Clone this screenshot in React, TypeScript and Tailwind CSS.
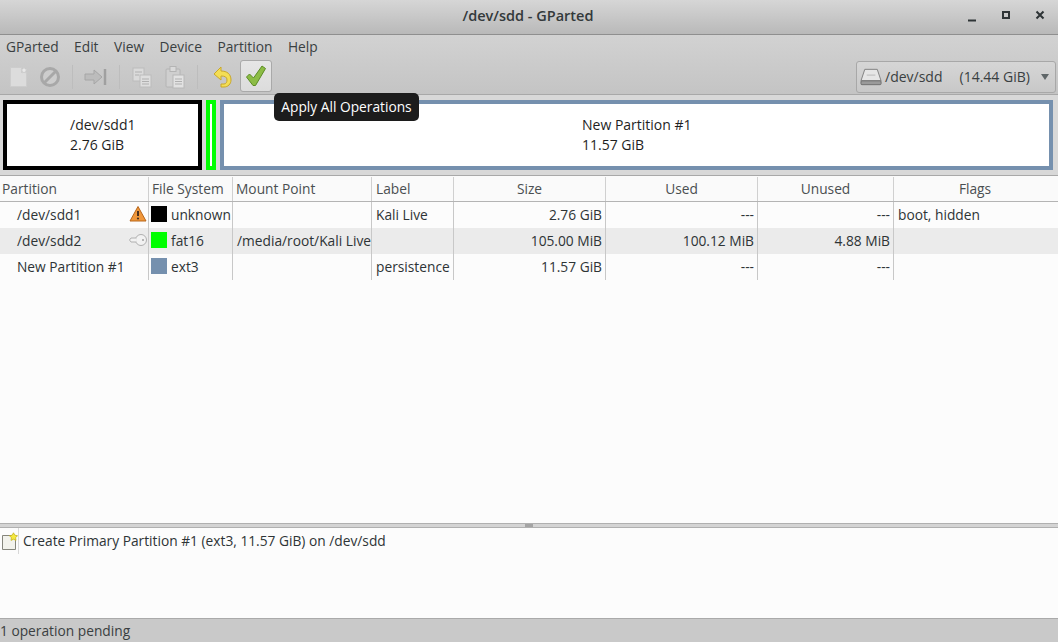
const font = "font-['Open_Sans','Noto_Sans',sans-serif]";

const columns = "grid grid-cols-[149px_84px_139px_82px_152px_152px_136px_1fr]";

function DisabledNewIcon() {
  return (
    <svg width="20" height="22" viewBox="0 0 20 22">
      <path d="M1.500 1.500h11l5 5v14h-16z" fill="#dcdcdc" stroke="#cdcdcd" />
      <path d="M12.500 1.500v5h5" fill="#c6c6c6" stroke="#cdcdcd" />
      <path d="M15 1l1 2 2 .5-1.500 1.500.3 2-1.800-1-1.800 1 .3-2L12 3.500l2-.5z" fill="#e8e8e8" stroke="#c4c4c4" strokeWidth="0.500" />
    </svg>
  );
}

function PendingIcon() {
  return (
    <svg className="shrink-0" width="17" height="19" viewBox="0 0 17 19">
      <path d="M1.500 3.500h9l4 4v10h-13z" fill="#f2f2ec" stroke="#85857c" />
      <path d="M12.500 0.800l1.300 2.400 2.700.5-1.900 2 .4 2.700-2.500-1.200-2.500 1.200.4-2.700-1.900-2 2.700-.5z" fill="#f6ea3e" stroke="#c4b21f" strokeWidth="0.800" />
    </svg>
  );
}

function CopyIcon() {
  return (
    <svg width="22" height="22" viewBox="0 0 22 22">
      <rect x="2" y="2" width="11" height="13" fill="#dadada" stroke="#bcbcbc" />
      <rect x="9" y="9" width="11" height="12" fill="#dedede" stroke="#bcbcbc" />
      <path d="M4 6h7M4 9h4M11 13h7M11 15.500h7M11 18h7" stroke="#b0b0b0" />
    </svg>
  );
}

function PasteIcon() {
  return (
    <svg width="22" height="24" viewBox="0 0 22 24">
      <rect x="2" y="4" width="14" height="18" rx="1" fill="#cfcfcf" stroke="#b4b4b4" />
      <rect x="6" y="1.500" width="6" height="5" fill="#dadada" stroke="#b4b4b4" />
      <rect x="9" y="10" width="11" height="13" fill="#e2e2e2" stroke="#b8b8b8" />
      <path d="M11 14h7M11 16.500h7M11 19h7" stroke="#b0b0b0" />
    </svg>
  );
}

function Sep() {
  return <div className="h-[24px] w-px bg-[#bdbdbd]" />;
}

function TreeCell({ children, className = "" }: { children?: React.ReactNode; className?: string }) {
  return (
    <div className={`flex h-[26px] items-center overflow-hidden whitespace-nowrap border-r border-[#c8c8c8] ${className}`}>
      {children}
    </div>
  );
}

const rows = [
  {
    name: "/dev/sdd1",
    icon: "warn",
    color: "bg-black",
    fs: "unknown",
    mount: "",
    label: "Kali Live",
    size: "2.76 GiB",
    used: "---",
    unused: "---",
    flags: "boot, hidden",
  },
  {
    name: "/dev/sdd2",
    icon: "key",
    color: "bg-[#00ff00]",
    fs: "fat16",
    mount: "/media/root/Kali Live",
    label: "",
    size: "105.00 MiB",
    used: "100.12 MiB",
    unused: "4.88 MiB",
    flags: "",
  },
  {
    name: "New Partition #1",
    icon: "",
    color: "bg-[#7590ae]",
    fs: "ext3",
    mount: "",
    label: "persistence",
    size: "11.57 GiB",
    used: "---",
    unused: "---",
    flags: "",
  },
];

export default function App() {
  return (
    <div className={`relative flex h-[642px] w-[1058px] flex-col overflow-hidden bg-[#fcfcfc] text-[13.750px] text-[#2e3436] ${font}`}>
      {/* Title bar */}
      <div className="flex h-[35px] shrink-0 items-center border-b border-[#8f8f8f] bg-gradient-to-b from-[#d6d6d6] to-[#b9b9b9] pb-[2px] pr-[11px]">
        <div className="flex-1 pl-[91px] text-center text-[14.500px] font-semibold text-[#33393b]">/dev/sdd - GParted</div>
        <div className="flex items-center gap-[20px]">
          <svg width="14" height="14" viewBox="0 0 14 14">
            <path d="M3 11.500h8" stroke="#2e3436" strokeWidth="2" />
          </svg>
          <svg width="14" height="14" viewBox="0 0 14 14">
            <rect x="4" y="3" width="6" height="6" fill="none" stroke="#2e3436" strokeWidth="2" />
          </svg>
          <svg width="14" height="14" viewBox="0 0 14 14">
            <path d="M3.500 2.500l7 7M10.500 2.500l-7 7" stroke="#2e3436" strokeWidth="2" />
          </svg>
        </div>
      </div>

      {/* Menu + toolbar */}
      <div className="relative h-[60px] shrink-0 border-b border-[#a8a8a8] bg-gradient-to-b from-[#d2d2d2] to-[#c4c4c4]">
        <div className="flex h-[25px] items-center gap-[15.500px] pb-[1px] pl-[6px] text-[#3a3f41]">
          <span>GParted</span>
          <span>Edit</span>
          <span>View</span>
          <span>Device</span>
          <span>Partition</span>
          <span>Help</span>
        </div>
        <div className="flex h-[34px] items-center pl-[5px]">
          <div className="flex w-[28px] justify-center"><DisabledNewIcon /></div>
          <div className="ml-[6px] flex w-[22px] justify-center">
            <svg width="22" height="22" viewBox="0 0 22 22">
              <circle cx="11" cy="11" r="8.500" fill="#cdcdcd" stroke="#a8a8a8" strokeWidth="3" />
              <path d="M5 17L17 5" stroke="#a8a8a8" strokeWidth="3" />
            </svg>
          </div>
          <div className="ml-[11px]"><Sep /></div>
          <div className="ml-[11px] flex w-[24px] justify-center">
            <svg width="24" height="22" viewBox="0 0 24 22">
              <path d="M1 8h9V4l8 7-8 7v-4H1z" fill="#bcbcbc" stroke="#a6a6a6" />
              <path d="M21 3v16" stroke="#a0a0a0" strokeWidth="2.500" />
            </svg>
          </div>
          <div className="ml-[11px]"><Sep /></div>
          <div className="ml-[11px]"><CopyIcon /></div>
          <div className="ml-[11px]"><PasteIcon /></div>
          <div className="ml-[11px]"><Sep /></div>
          <div className="ml-[14px] flex w-[22px] justify-center">
            <svg width="20" height="24" viewBox="0 0 20 24">
              <path
                d="M1 9l7-7v4c6 0 10 3 10 9 0 4-3 7-7 7H8v-3h3c2 0 3-2 3-4 0-3-2-4-6-4v4z"
                fill="#f4de55"
                stroke="#c9a82a"
              />
            </svg>
          </div>
          <div className="mb-[2px] ml-[6px] flex h-[32px] w-[32px] items-center justify-center rounded-[3px] border border-[#a9a9a9] bg-gradient-to-b from-[#e6e6e6] to-[#dcdcdc]">
            <svg width="22" height="22" viewBox="0 0 22 22">
              <path
                d="M1.500 12l3-3 4 4 8.500-12 3.500 2.500L10.500 20.500h-2.500z"
                fill="#8cbc45"
                stroke="#5b8c24"
                strokeLinejoin="round"
              />
            </svg>
          </div>
        </div>

        {/* Device selector */}
        <div className="absolute right-[2px] top-[26px] flex h-[32px] w-[200px] items-center rounded-[3px] border border-[#a8a8a8] bg-gradient-to-b from-[#d6d6d6] to-[#c8c8c8] pb-[1px] pl-[3px] text-[14px] text-[#3a3f41]">
          <svg width="23" height="20" viewBox="0 0 24 20">
            <path d="M5 2h13l4 12H1z" fill="#e6e6e6" stroke="#7f7f7f" />
            <rect x="1" y="14" width="21" height="4" rx="1" fill="#9a9a9a" stroke="#6f6f6f" />
            <path d="M7 8h9" stroke="#b8b8b8" />
          </svg>
          <span className="ml-[2px]">/dev/sdd</span>
          <span className="ml-[17px]">(14.44 GiB)</span>
          <svg className="ml-[10px]" width="10" height="6" viewBox="0 0 10 6">
            <path d="M1 0h8L5 6z" fill="#5f6668" />
          </svg>
        </div>
      </div>

      {/* Partition map */}
      <div className="flex h-[81px] shrink-0 gap-[4px] border-b border-[#a8a8a8] bg-[#d8d8d8] pb-[5px] pl-[3px] pr-[5px] pt-[5px] text-[14px] leading-[20px] text-[#1f1f1f]">
        <div className="flex w-[199px] flex-col items-start justify-center border-[4px] border-black bg-white pl-[63px]">
          <span>/dev/sdd1</span>
          <span>2.76 GiB</span>
        </div>
        <div className="w-[10px] border-[4px] border-[#00ff00] bg-white" />
        <div className="flex flex-1 flex-col items-start justify-center border-[4px] border-[#7590ae] bg-white pl-[358px]">
          <span>New Partition #1</span>
          <span>11.57 GiB</span>
        </div>
      </div>

      {/* Partition list */}
      <div className="flex min-h-0 flex-1 flex-col">
        <div className={`${columns} h-[26px] shrink-0 border-b border-[#b4b4b4] bg-[#fafafa] pt-[1px] text-[#4a4f51]`}>
          <div className="flex items-center border-r border-[#d0d0d0] pl-[2px]">Partition</div>
          <div className="flex items-center border-r border-[#d0d0d0] pl-[3px]">File System</div>
          <div className="flex items-center border-r border-[#d0d0d0] pl-[3px]">Mount Point</div>
          <div className="flex items-center border-r border-[#d0d0d0] pl-[4px]">Label</div>
          <div className="flex items-center justify-center border-r border-[#d0d0d0]">Size</div>
          <div className="flex items-center justify-center border-r border-[#d0d0d0]">Used</div>
          <div className="flex items-center justify-center border-r border-[#d0d0d0]">Unused</div>
          <div className="flex items-center justify-center pr-[2px]">Flags</div>
        </div>
        {rows.map((r, i) => (
          <div key={r.name} className={`${columns} ${i === 1 ? "bg-[#ebebeb]" : "bg-[#fcfcfc]"}`}>
            <TreeCell className="justify-between pl-[17px] pr-[1px]">
              <span>{r.name}</span>
              {r.icon === "warn" && (
                <svg className="mb-[2px]" width="18" height="18" viewBox="0 0 18 18">
                  <path d="M9 1.500L17 16H1z" fill="#f0973a" stroke="#b8661a" strokeLinejoin="round" />
                  <path d="M9 6v5" stroke="#4a3020" strokeWidth="2" />
                  <circle cx="9" cy="13.500" r="1.100" fill="#4a3020" />
                </svg>
              )}
              {r.icon === "key" && (
                <svg className="mb-[2px]" width="18" height="14" viewBox="0 0 18 14">
                  <circle cx="12" cy="7" r="5.500" fill="#f2f2f2" stroke="#b0b0b0" />
                  <path d="M7 5H2L0.500 7 2 9h5" fill="#f2f2f2" stroke="#b0b0b0" />
                  <circle cx="14" cy="7" r="1" fill="#a0a0a0" />
                </svg>
              )}
            </TreeCell>
            <TreeCell className="pl-[2px]">
              <span className={`mb-[2px] h-[16px] w-[16px] ${r.color}`} />
              <span className="ml-[4px]">{r.fs}</span>
            </TreeCell>
            <TreeCell className="pl-[4px]">{r.mount}</TreeCell>
            <TreeCell className="pl-[4px]">{r.label}</TreeCell>
            <TreeCell className="justify-end pr-[3px]">{r.size}</TreeCell>
            <TreeCell className="justify-end pr-[3px]">{r.used}</TreeCell>
            <TreeCell className="justify-end pr-[3px]">{r.unused}</TreeCell>
            <div className="flex h-[26px] items-center pl-[4px]">{r.flags}</div>
          </div>
        ))}
      </div>

      {/* Pane handle */}
      <div className="flex h-[5px] shrink-0 items-center justify-center border-y border-[#b0b0b0] bg-[#d4d4d4]">
        <div className="h-[3px] w-[8px] bg-[#a4a4a4]" />
      </div>

      {/* Pending operations */}
      <div className="h-[90px] shrink-0 bg-[#fcfcfc]">
        <div className="flex h-[26px] items-center">
          <div className="flex h-full w-[19px] items-center justify-center border-r border-[#d8d8d8]">
            <PendingIcon />
          </div>
          <span className="ml-[4px]">Create Primary Partition #1 (ext3, 11.57 GiB) on /dev/sdd</span>
        </div>
      </div>

      {/* Status bar */}
      <div className="flex h-[24px] shrink-0 items-center border-t border-[#aaaaaa] bg-[#c9c9c9] pt-[1px] text-[#3a3f41]">
        1 operation pending
      </div>

      {/* Tooltip */}
      <div className="absolute left-[274px] top-[93px] flex h-[28px] w-[145px] items-center justify-center rounded-[5px] bg-[#1c1c1c] text-white">
        Apply All Operations
      </div>
    </div>
  );
}
